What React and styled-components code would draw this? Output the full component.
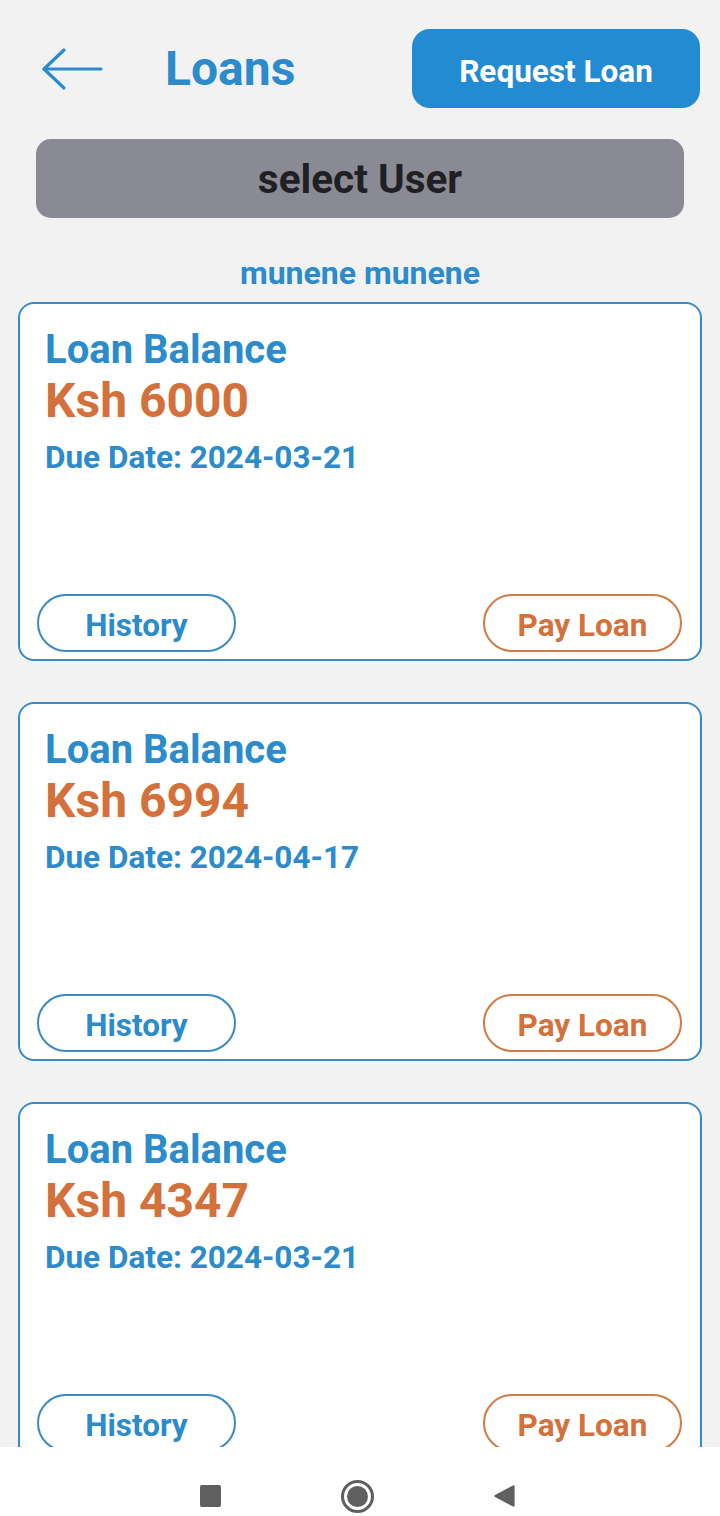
import styled, { createGlobalStyle } from "styled-components";

const loans = [
  { id: 1, balance: 6000, due: "2024-03-21" },
  { id: 2, balance: 6994, due: "2024-04-17" },
  { id: 3, balance: 4347, due: "2024-03-21" },
];

function BackArrow() {
  return (
    <svg width="62" height="44" viewBox="0 0 62 44" fill="none">
      <path d="M3 22H60" stroke="#2b8bcb" strokeWidth="3.2" strokeLinecap="round" />
      <path d="M23 3L3 22L23 41" stroke="#2b8bcb" strokeWidth="3.2" strokeLinecap="round" strokeLinejoin="round" />
    </svg>
  );
}

function App() {
  return (
    <>
      <GlobalStyle />
      <Page>
        <Header>
          <BackButton aria-label="back">
            <BackArrow />
          </BackButton>
          <Title>Loans</Title>
          <RequestButton>Request Loan</RequestButton>
        </Header>

        <SelectBar>select User</SelectBar>
        <UserName>munene munene</UserName>

        <CardList>
          {loans.map(loan => (
            <Card key={loan.id}>
              <Info>
                <Label>Loan Balance</Label>
                <Amount>Ksh {loan.balance}</Amount>
                <DueDate>Due Date: {loan.due}</DueDate>
              </Info>
              <Actions>
                <PillButton $tone="blue">History</PillButton>
                <PillButton $tone="orange">Pay Loan</PillButton>
              </Actions>
            </Card>
          ))}
        </CardList>
      </Page>

      <NavBar>
        <NavSlot><NavSquare /></NavSlot>
        <NavSlot><NavCircle /></NavSlot>
        <NavSlot>
          <svg width="24" height="26" viewBox="0 0 24 26">
            <path d="M21 2.5L3 12C2 12.6 2 13.4 3 14L21 23.5C22 24 22.6 23.6 22.6 22.6V3.4C22.6 2.4 22 2 21 2.5Z" fill="#5f5f5f" />
          </svg>
        </NavSlot>
      </NavBar>
    </>
  );
}

const GlobalStyle = createGlobalStyle`
  body {
    margin: 0;
    background: #f2f2f2;
    font-family: Roboto, "Noto Sans", Arial, sans-serif;
  }
  * { box-sizing: border-box; }
`;

const Page = styled.div`
  padding-top: 29px;
  padding-bottom: 80px;
`;

const Header = styled.header`
  display: flex;
  align-items: center;
  height: 79px;
  padding: 0 20px 0 41px;
`;

const BackButton = styled.button`
  display: flex;
  align-items: center;
  background: none;
  border: none;
  padding: 0;
  width: 62px;
  cursor: pointer;
`;

const Title = styled.h1`
  margin: 0 0 0 62px;
  font-size: 48px;
  font-weight: 700;
  color: #2b8bcb;
  line-height: 1;
`;

const RequestButton = styled.button`
  margin-left: auto;
  width: 288px;
  height: 79px;
  border: none;
  border-radius: 18px;
  background: #238bd1;
  color: #fff;
  font-family: inherit;
  font-size: 31.5px;
  font-weight: 700;
  padding: 5px 0 0;
  cursor: pointer;
`;

const SelectBar = styled.div`
  margin: 31px 36px 0;
  height: 79px;
  border-radius: 15px;
  background: #898a93;
  color: #1f1f24;
  font-size: 40.5px;
  font-weight: 700;
  display: flex;
  align-items: center;
  justify-content: center;
`;

const UserName = styled.div`
  margin-top: 38px;
  height: 34px;
  line-height: 34px;
  text-align: center;
  font-size: 32px;
  font-weight: 700;
  color: #2b8bcb;
`;

const CardList = styled.div`
  margin-top: 12px;
  padding: 0 18px;
  display: flex;
  flex-direction: column;
  gap: 41px;
`;

const Card = styled.div`
  height: 359px;
  background: #fff;
  border: 2px solid #3a8ac3;
  border-radius: 16px;
  padding: 24px 18px 7px 17px;
  display: flex;
  flex-direction: column;
  justify-content: space-between;
`;

const Info = styled.div`
  padding-left: 8px;
  display: flex;
  flex-direction: column;
`;

const Label = styled.div`
  font-size: 40px;
  line-height: 44px;
  font-weight: 700;
  color: #2b8bcb;
`;

const Amount = styled.div`
  margin-top: 2px;
  font-size: 48px;
  line-height: 54px;
  font-weight: 700;
  color: #d4703a;
`;

const DueDate = styled.div`
  margin-top: 12px;
  font-size: 31.5px;
  line-height: 36px;
  font-weight: 700;
  color: #2b8bcb;
`;

const Actions = styled.div`
  display: flex;
  justify-content: space-between;
`;

const PillButton = styled.button`
  width: 199px;
  height: 58px;
  border-radius: 29px;
  background: #fff;
  border: 2px solid ${({ $tone }) => ($tone === "orange" ? "#d4793f" : "#3a8ac3")};
  color: ${({ $tone }) => ($tone === "orange" ? "#d4703a" : "#2b8bcb")};
  font-family: inherit;
  font-size: 31.5px;
  font-weight: 700;
  padding: 4px 0 0;
  cursor: pointer;
`;

const NavBar = styled.nav`
  position: fixed;
  left: 0;
  right: 0;
  bottom: 0;
  height: 69px;
  background: #fff;
  display: flex;
  justify-content: center;
  align-items: flex-start;
  padding-top: 29px;
  padding-right: 6px;
  gap: 107px;
`;

const NavSlot = styled.div`
  width: 40px;
  height: 40px;
  display: flex;
  align-items: center;
  justify-content: center;
`;

const NavSquare = styled.div`
  width: 21px;
  height: 22px;
  border-radius: 2px;
  background: #5f5f5f;
`;

const NavCircle = styled.div`
  width: 33px;
  height: 33px;
  border-radius: 50%;
  border: 3px solid #5f5f5f;
  display: flex;
  align-items: center;
  justify-content: center;
  &::after {
    content: "";
    width: 21px;
    height: 21px;
    border-radius: 50%;
    background: #5f5f5f;
  }
`;

export default App;
